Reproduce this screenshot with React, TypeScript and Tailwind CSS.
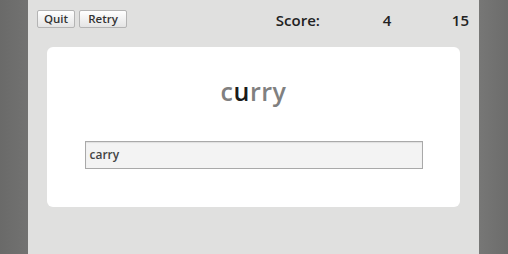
export default function App() {
  return (
    <div className="flex h-[254px] w-full font-['Open_Sans',sans-serif]">
      <div className="w-[28px] bg-gradient-to-r from-[#6a6a69] to-[#727271]" />
      <div className="flex flex-1 flex-col bg-[#e0e0df]">
        <div className="flex h-[47px] items-start pl-[9px] pr-[10px] pt-[10px]">
          <button className="h-[18px] w-[38px] rounded-[2px] border border-[#b4b4b4] bg-gradient-to-b from-white to-[#e4e4e4] text-[11.5px] font-semibold leading-none text-[#333]">
            Quit
          </button>
          <button className="ml-[4px] h-[18px] w-[48px] rounded-[2px] border border-[#b4b4b4] bg-gradient-to-b from-white to-[#e4e4e4] text-[11.5px] font-semibold leading-none text-[#333]">
            Retry
          </button>
          <div className="ml-auto flex items-center pt-[1px] text-[15px] font-semibold leading-[18px] text-[#222]">
            <span className="w-[107px]">Score:</span>
            <span className="w-[69px]">4</span>
            <span>15</span>
          </div>
        </div>
        <div className="mx-[19px] flex h-[160px] flex-col items-center rounded-[6px] bg-white">
          <div className="mt-[26px] text-[25px] font-semibold leading-[36px] tracking-[0.5px] text-[#808080]">
            c<span className="text-[#1a1a1a]">u</span>rry
          </div>
          <div className="mt-[32px] flex h-[28px] w-[338px] items-center border border-[#a9a9a9] bg-[#f3f3f3] px-[4px] text-[12px] font-semibold text-[#444] shadow-[inset_0_1px_1px_rgba(0,0,0,0.08)]">
            carry
          </div>
        </div>
      </div>
      <div className="w-[29px] bg-gradient-to-r from-[#777776] to-[#6c6c6b]" />
    </div>
  );
}
